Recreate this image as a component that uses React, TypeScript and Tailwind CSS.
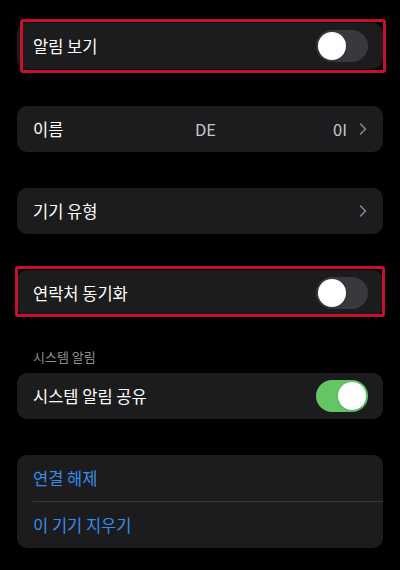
import { ChevronRight } from 'lucide-react'

const FONT = { fontFamily: '"Noto Sans CJK KR", "Noto Sans", sans-serif' }

function Toggle({ on }: { on: boolean }) {
  return (
    <div
      className={`relative h-[32px] w-[52px] rounded-full ${on ? 'bg-[#65c466]' : 'bg-[#39393d]'}`}
    >
      <div
        className={`absolute top-[2px] h-[28px] w-[28px] rounded-full bg-white shadow ${on ? 'right-[2px]' : 'left-[2px]'}`}
      />
    </div>
  )
}

function Card({ children }: { children: React.ReactNode }) {
  return <div className="rounded-[10px] bg-[#1c1c1e]">{children}</div>
}

function Row({ children }: { children: React.ReactNode }) {
  return <div className="flex h-[46px] items-center pl-4 pr-[15px]">{children}</div>
}

function Chevron() {
  return <ChevronRight className="mr-[-5px] h-[20px] w-[20px] text-[#8a8a8e]" strokeWidth={1.8} />
}

export default function App() {
  return (
    <div className="min-h-[570px] w-full bg-black px-[17px] pt-[23px] text-[16.5px] text-white" style={FONT}>
      <div className="relative">
        <Card>
          <Row>
            <span className="flex-1">알림 보기</span>
            <Toggle on={false} />
          </Row>
        </Card>
        <div className="absolute left-[3px] right-[-3px] top-[-4px] bottom-[-4px] rounded-[3px] border-[3px] border-[#c8102e]" />
      </div>

      <div className="mt-[37px]">
        <Card>
          <Row>
            <span className="w-[162px]">이름</span>
            <span className="text-[#c8c8cc]">DE</span>
            <span className="flex-1" />
            <span className="mr-[6px] text-[#c8c8cc]">0I</span>
            <Chevron />
          </Row>
        </Card>
      </div>

      <div className="mt-[36px]">
        <Card>
          <Row>
            <span className="flex-1">기기 유형</span>
            <Chevron />
          </Row>
        </Card>
      </div>

      <div className="relative mt-[36px]">
        <Card>
          <Row>
            <span className="flex-1">연락처 동기화</span>
            <Toggle on={false} />
          </Row>
        </Card>
        <div className="absolute left-[-2px] right-[-2px] top-[-4px] bottom-[-1px] rounded-[3px] border-[3px] border-[#c8102e]" />
      </div>

      <div className="mt-[32px] mb-[8px] pl-4 text-[13px] leading-[17px] text-[#8e8e93]">시스템 알림</div>
      <Card>
        <Row>
          <span className="flex-1">시스템 알림 공유</span>
          <Toggle on={true} />
        </Row>
      </Card>

      <div className="mt-[36px]">
        <Card>
          <Row>
            <span className="text-[#3a8ce8]">연결 해제</span>
          </Row>
          <div className="ml-4 h-px bg-[#38383a]" />
          <Row>
            <span className="text-[#3a8ce8]">이 기기 지우기</span>
          </Row>
        </Card>
      </div>
    </div>
  )
}
